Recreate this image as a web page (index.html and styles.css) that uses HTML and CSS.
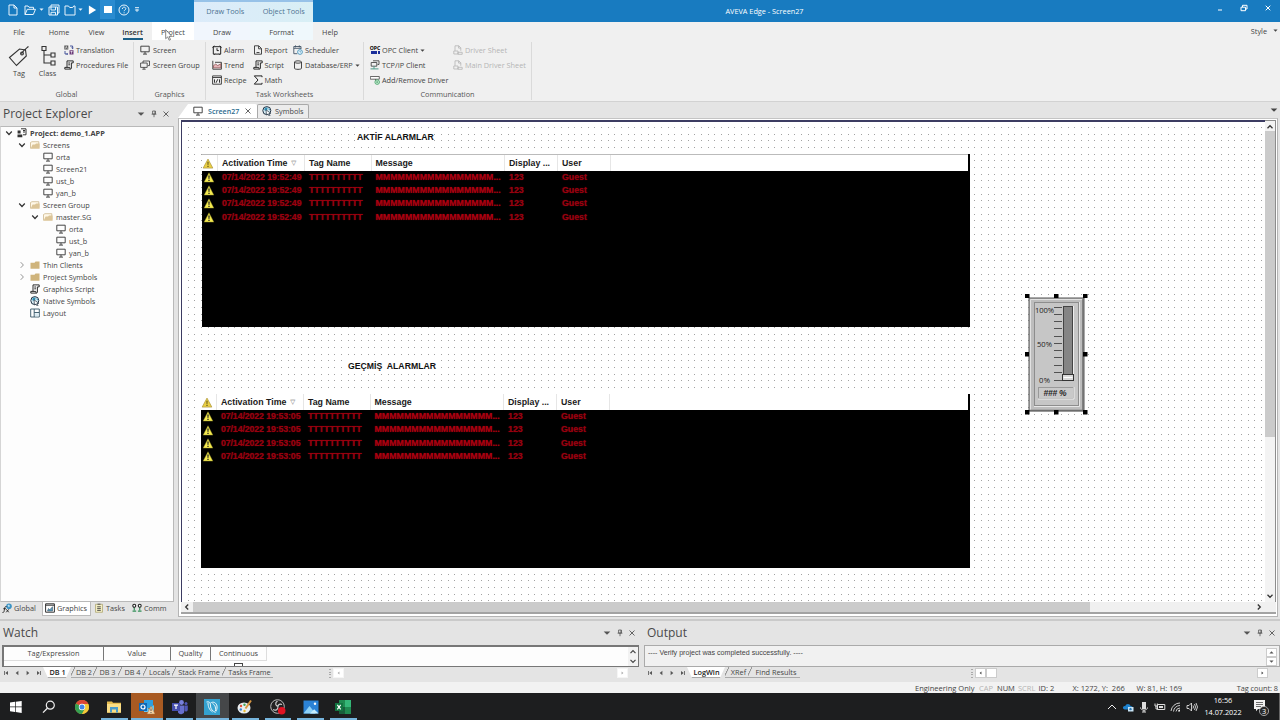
FILE: index.html
```html
<!DOCTYPE html>
<html lang="en">
<head>
<meta charset="utf-8">
<title>AVEVA Edge - Screen27</title>
<link rel="stylesheet" href="styles.css">
</head>
<body>
<svg class="sprite" width="0" height="0" aria-hidden="true">
<defs>
<symbol id="monitor" viewBox="0 0 10 10"><path d="M.8 1.2h8.4v5.6H.8zM5 6.8v2.2M3 9.1h4" fill="none" stroke="#333" stroke-width=".9"/></symbol>
<symbol id="monitors" viewBox="0 0 10 10"><path d="M3 1h6.5v4.6H7.8M.6 3h6.6v4.4H.6zM3 3V1M4 7.4v1.8M2.3 9.2h3.4" fill="none" stroke="#333" stroke-width=".8"/></symbol>
<symbol id="script" viewBox="0 0 10 10"><path d="M3 .9h6.2v2H7.4V8c0 1.4-1.6 1.4-1.6 0V7.4H.8v1.7h5.6M3 .9v6.3M4.3 3h1.8M4.3 4.8h1.8" fill="none" stroke="#222" stroke-width=".95"/></symbol>
<symbol id="translate" viewBox="0 0 10 10"><path d="M.3 .5h4v4h-4z" fill="#555"/><path d="M5.5 5.2h4v4.3h-4z" fill="#6b3a78"/><path d="M1.3 3.7l1-2.3 1 2.3M6.3 6.3h2.4M7.5 6v2.7" stroke="#fff" stroke-width=".6" fill="none"/><path d="M6 1h2.6v2.5M1 6v3h2.5M7.5 2.7l1.1 1 1-1M2.7 8l1 1-1 1" fill="none" stroke="#238" stroke-width=".8"/></symbol>
<symbol id="folder-open" viewBox="0 0 10 10"><path d="M.5 8.5v-6L2 1.7h6.8v5.800" fill="#fff8e8" stroke="#cdb88d" stroke-width=".8"/><path d="M.6 8.800L2.600 4.500H5l1-1h3.600v5.300z" fill="#dcc598"/></symbol>
<symbol id="folder" viewBox="0 0 10 10"><path d="M.5 2.800h4l1-1.200h4v7.200h-9z" fill="#cfb47c"/></symbol>
<symbol id="chev-down" viewBox="0 0 8 8"><path d="M1.200 2.500L4 5.500l2.800-3" fill="none" stroke="#333" stroke-width="1.200"/></symbol>
<symbol id="chev-right" viewBox="0 0 8 8"><path d="M2.700 1.200l2.700 2.800-2.700 2.800" fill="none" stroke="#888" stroke-width=".9"/></symbol>
<symbol id="tri-down" viewBox="0 0 6 6"><path d="M.5 1.800h5L3 4.400z" fill="currentColor"/></symbol>
<symbol id="tri-up" viewBox="0 0 6 6"><path d="M.5 4.200h5L3 1.600z" fill="currentColor"/></symbol>
<symbol id="tri-left" viewBox="0 0 6 6"><path d="M4.400 .7v4.600L1.700 3z" fill="currentColor"/></symbol>
<symbol id="tri-right" viewBox="0 0 6 6"><path d="M1.600 .7v4.600L4.300 3z" fill="currentColor"/></symbol>
<symbol id="tri-first" viewBox="0 0 6 6"><path d="M5 1v4L2.300 3zM1 1h.8v4H1z" fill="currentColor"/></symbol>
<symbol id="tri-last" viewBox="0 0 6 6"><path d="M1 1v4l2.700-2zM4.200 1H5v4h-.8z" fill="currentColor"/></symbol>
<symbol id="pin" viewBox="0 0 8 8"><path d="M2.600 1h2.800v3H2.600zM1.600 4.200h4.800M4 4.200v3" fill="none" stroke="#555" stroke-width=".8"/><path d="M4.600 1h.8v3h-.8z" fill="#555"/></symbol>
<symbol id="close" viewBox="0 0 8 8"><path d="M1.500 1.500l5 5M6.500 1.500l-5 5" stroke="currentColor" stroke-width=".9" fill="none"/></symbol>
<symbol id="globe" viewBox="0 0 10 10"><circle cx="4.800" cy="4.600" r="4" fill="#d9edf5" stroke="#234" stroke-width="1"/><path d="M2.500 2.300L5 1.200l.7 1.900L4 4.700 2.300 4.300zM6.300 2.200l1.800 1.400-1 1z" fill="#2f8fb5"/><path d="M4 3.800l4.800 3.500-2 .3 1.300 1.900-1 .5-1.100-2L4.500 9z" fill="#fff" stroke="#234" stroke-width=".7"/></symbol>
<symbol id="layout" viewBox="0 0 10 10"><path d="M.7 1h8.600v8H.7zM4.200 1v8M4.200 4.500h5" fill="#fff" stroke="#356" stroke-width=".9"/><path d="M5 5.300h3.600v3H5z" fill="#d8eaf2"/></symbol>
<symbol id="warn" viewBox="0 0 12 12"><path d="M6 .8L11.300 11H.7z" fill="#f5ea50" stroke="#8b8524" stroke-width=".5" stroke-linejoin="round"/><path d="M5.200 3.700h1.600l-.35 4h-.9zM5.300 8.500h1.400v1.400H5.300z" fill="#222"/></symbol>
<symbol id="warn-soft" viewBox="0 0 12 12"><path d="M6 1.200L11.300 11H.7z" fill="#e9cf42" stroke="#b09a45" stroke-width=".8" stroke-linejoin="round"/><path d="M5.400 4h1.200l-.2 3.700h-.8zM5.400 8.500h1.200v1.300H5.400z" fill="#544716"/></symbol>
<symbol id="sheet" viewBox="0 0 10 10"><path d="M2 .8h3.800l2 2v3M2 .8v5M5.600 .8v2.300h2.200M.8 6h4.200v3H.8zM5 7.300h4.200v2H5z" fill="none" stroke="#b4b4b4" stroke-width=".8"/></symbol>
</defs>
</svg>

<div class="window">
  <header class="titlebar">
    <div class="quick">
      <svg class="q q-new" viewBox="0 0 10 12"><path d="M1 1h5l3 3v7H1zM6 1v3h3"/></svg>
      <svg class="q q-open" viewBox="0 0 12 12"><path d="M1 10.500V2h3l1 1.300h4.500v2M1 10.500L3.300 5.300H11.500L9.300 10.500z"/></svg>
      <svg class="caret c1"><use href="#tri-down"/></svg>
      <svg class="q q-save" viewBox="0 0 12 12"><path d="M3 3V1h8v8H9.500M1 3h8.500v8H1zM3 3v3h4.500V3M3 11V8.300h4.500V11"/></svg>
      <svg class="q q-dir" viewBox="0 0 12 12"><path d="M1 2h3.500l1.200 1.500h3L9.700 2H11v9H1z"/></svg>
      <svg class="caret c2"><use href="#tri-down"/></svg>
      <svg class="q q-play" viewBox="0 0 10 12"><path d="M1 1l8 5-8 5z" fill="#fff"/></svg>
      <span class="stop"><i></i></span>
      <svg class="q q-help" viewBox="0 0 12 12"><circle cx="6" cy="6" r="5"/><path d="M4.300 5c0-2.500 3.500-2.300 3.500-.3C7.800 6 6.100 5.900 6.100 7.200M6.100 8.300v1"/></svg>
      <svg class="q q-more" viewBox="0 0 6 6"><path d="M1 .7h4M1.500 2.800L3 4.500l1.500-1.700z"/></svg>
    </div>
    <div class="ctx-heads"><span>Draw Tools</span><span>Object Tools</span></div>
    <div class="app-title">AVEVA Edge - Screen27</div>
    <div class="win-btns">
      <svg viewBox="0 0 8 8"><path d="M2 6h4"/></svg>
      <svg viewBox="0 0 8 8"><path d="M1 3.200h4.500v3.500H1zM2.500 3V1.300H7V5H5.700"/></svg>
      <svg viewBox="0 0 8 8"><path d="M1.700 1.700l4.600 4.600M6.300 1.700L1.700 6.300"/></svg>
    </div>
  </header>

  <nav class="menu">
    <span class="m-file">File</span><span class="m-home">Home</span><span class="m-view">View</span>
    <span class="m-insert">Insert</span><span class="m-project">Project</span>
    <span class="m-draw">Draw</span><span class="m-format">Format</span><span class="m-help">Help</span>
    <span class="m-style">Style<svg class="caret"><use href="#tri-down"/></svg></span>
  </nav>

  <section class="ribbon">
    <div class="group g-global">
      <div class="group-body">
        <div class="big"><svg viewBox="0 0 22 22"><path d="M1.500 12.500L11.500 4l6 1 .8 6L8.500 20.500zM13.500 8.700c2-3.500 4.500-5 7-7.200" /><circle cx="14" cy="8.500" r="1.400"/></svg><span>Tag</span></div>
        <div class="big"><svg viewBox="0 0 22 22"><path d="M5 1.500h4v4H5zM7 5.500V18h7M7 10h7M14 8h4v4h-4zM14 16h4v4h-4z"/></svg><span>Class</span></div>
        <div class="items">
          <div class="item"><svg><use href="#translate"/></svg>Translation</div>
          <div class="item"><svg><use href="#script"/></svg>Procedures File</div>
        </div>
      </div>
      <div class="group-name">Global</div>
    </div>
    <div class="group g-graphics">
      <div class="group-body items">
        <div class="item"><svg><use href="#monitor"/></svg>Screen</div>
        <div class="item"><svg><use href="#monitors"/></svg>Screen Group</div>
      </div>
      <div class="group-name">Graphics</div>
    </div>
    <div class="group g-task">
      <div class="group-body">
        <div class="items">
          <div class="item"><svg viewBox="0 0 10 10"><path d="M1.300 1.700h7.400v7.400H1.300z" fill="none" stroke="#222"/><path d="M5 3.200v2.400h1.800M.5 2.500l1.700-1.800M7.800 .7l1.700 1.800M2 9.800l1-1M8 9.800l-1-1" stroke="#222" fill="none"/></svg>Alarm</div>
          <div class="item"><svg viewBox="0 0 10 10"><path d="M.8 .8v8.400h8.600V2.300H3" fill="none" stroke="#333" stroke-width=".9"/><path d="M1.500 7.800V5.600l2.200-1.500 2 1.500L8.800 3.800v4z" fill="#e6b7bb" stroke="#733" stroke-width=".6"/></svg>Trend</div>
          <div class="item"><svg viewBox="0 0 10 10"><path d="M.6 .9h8.800v8.300H.6zM.6 2.500h8.800" fill="none" stroke="#333" stroke-width=".9"/><path d="M2.500 4.400v3.300M4 7.800l1.800-3.600M7.500 4.400v3.300" stroke="#333"/></svg>Recipe</div>
        </div>
        <div class="items">
          <div class="item"><svg viewBox="0 0 10 10"><path d="M1.500 .8h4.300l2.700 2.700v5.700h-7zM5.600 1v2.800h2.800M3.500 7.500h3" fill="none" stroke="#333" stroke-width=".9"/></svg>Report</div>
          <div class="item"><svg><use href="#script"/></svg>Script</div>
          <div class="item"><svg viewBox="0 0 10 10"><path d="M9 2.200V.9H1.300L5 5 1.300 9.100H9V7.800" fill="none" stroke="#222"/></svg>Math</div>
        </div>
        <div class="items">
          <div class="item"><svg viewBox="0 0 10 10"><path d="M8 4V1.500H.8v7.200h3.500M.8 3.300H8M2.500 .4v2M6.300 .4v2" fill="none" stroke="#456" stroke-width=".9"/><circle cx="7" cy="7" r="2.400" fill="#e5f3fa" stroke="#3a8db8" stroke-width=".8"/><path d="M7 5.700V7h1" stroke="#3a8db8" stroke-width=".6" fill="none"/></svg>Scheduler</div>
          <div class="item"><svg viewBox="0 0 10 10"><path d="M1.500 2v6.300c0 1.400 7 1.400 7 0V2" fill="none" stroke="#333" stroke-width=".9"/><ellipse cx="5" cy="2" rx="3.500" ry="1.200" fill="none" stroke="#333" stroke-width=".9"/></svg>Database/ERP<svg class="caret"><use href="#tri-down"/></svg></div>
        </div>
      </div>
      <div class="group-name">Task Worksheets</div>
    </div>
    <div class="group g-comm">
      <div class="group-body">
        <div class="items">
          <div class="item"><span class="opc"><b>OPC</b><i></i></span>OPC Client<svg class="caret"><use href="#tri-down"/></svg></div>
          <div class="item"><svg viewBox="0 0 10 10"><path d="M3 .8h6v3.700H7.600M1.200 2.500h5.600v3.700H1.200z" fill="none" stroke="#333" stroke-width=".8"/><path d="M4 6.200v2.500M.5 8.900h8" stroke="#4a9a88" stroke-width="1"/></svg>TCP/IP Client</div>
          <div class="item"><svg viewBox="0 0 10 10"><path d="M.3 1.500h9v2.700h-9z" fill="#fff" stroke="#444" stroke-width=".8"/><path d="M5.500 4.200V6" stroke="#444" stroke-width=".8"/><circle cx="7.200" cy="7.100" r="2.300" fill="#d7f0df" stroke="#3aa060" stroke-width=".8"/><path d="M6 7.100h2.400M7.200 5.900v2.400" stroke="#3aa060" stroke-width=".6"/></svg>Add/Remove Driver</div>
        </div>
        <div class="items off">
          <div class="item"><svg><use href="#sheet"/></svg>Driver Sheet</div>
          <div class="item"><svg><use href="#sheet"/></svg>Main Driver Sheet</div>
        </div>
      </div>
      <div class="group-name">Communication</div>
    </div>
  </section>

  <main class="work">
    <aside class="explorer">
      <div class="pane-head"><h2>Project Explorer</h2><svg class="caret"><use href="#tri-down"/></svg><svg><use href="#pin"/></svg><svg><use href="#close"/></svg></div>
      <ul class="tree">
        <li class="l0"><svg class="chev"><use href="#chev-down"/></svg><svg class="ico" viewBox="0 0 10 10"><path d="M4 .8h5v6H6M6 2.500h2M6 4h2" fill="none" stroke="#333"/><path d="M.6 2.500h3v3h-3zM.5 6.500h4.800v2.700H.5z" fill="#333"/></svg><b>Project: demo_1.APP</b></li>
        <li class="l1"><svg class="chev"><use href="#chev-down"/></svg><svg class="ico"><use href="#folder-open"/></svg>Screens</li>
        <li class="l2"><i class="chev"></i><svg class="ico"><use href="#monitor"/></svg>orta</li>
        <li class="l2"><i class="chev"></i><svg class="ico"><use href="#monitor"/></svg>Screen21</li>
        <li class="l2"><i class="chev"></i><svg class="ico"><use href="#monitor"/></svg>ust_b</li>
        <li class="l2"><i class="chev"></i><svg class="ico"><use href="#monitor"/></svg>yan_b</li>
        <li class="l1"><svg class="chev"><use href="#chev-down"/></svg><svg class="ico"><use href="#folder-open"/></svg>Screen Group</li>
        <li class="l2"><svg class="chev"><use href="#chev-down"/></svg><svg class="ico"><use href="#folder-open"/></svg>master.SG</li>
        <li class="l3"><i class="chev"></i><svg class="ico"><use href="#monitor"/></svg>orta</li>
        <li class="l3"><i class="chev"></i><svg class="ico"><use href="#monitor"/></svg>ust_b</li>
        <li class="l3"><i class="chev"></i><svg class="ico"><use href="#monitor"/></svg>yan_b</li>
        <li class="l1"><svg class="chev"><use href="#chev-right"/></svg><svg class="ico"><use href="#folder"/></svg>Thin Clients</li>
        <li class="l1"><svg class="chev"><use href="#chev-right"/></svg><svg class="ico"><use href="#folder"/></svg>Project Symbols</li>
        <li class="l1"><i class="chev"></i><svg class="ico"><use href="#script"/></svg>Graphics Script</li>
        <li class="l1"><i class="chev"></i><svg class="ico"><use href="#globe"/></svg>Native Symbols</li>
        <li class="l1"><i class="chev"></i><svg class="ico"><use href="#layout"/></svg>Layout</li>
      </ul>
      <div class="side-tabs">
        <span class="st1"><svg viewBox="0 0 10 10"><circle cx="7" cy="3.300" r="2.800" fill="#3b93c4"/><path d="M5.500 2.300l1.500-.8 1 1.500-1.200 1.500" fill="#bfe0ef"/><path d="M.5 9.500c1.500.3 1.600-1 2-3.500.3-2 .7-2.700 2-2.500M1.300 5.700h2.600M4.300 6.300l2.500 3M6.800 6.300l-2.600 3" fill="none" stroke="#222" stroke-width=".9"/></svg>Global</span>
        <span class="st2"><svg viewBox="0 0 10 10"><path d="M.6 .8h8.800v8.400H.6zM.6 2.200h8.800" fill="#fff" stroke="#333"/><path d="M2.500 8l1-2.500 1.300 1.300L7.500 3.700V8z" fill="#58a0c4" stroke="#345" stroke-width=".5"/></svg>Graphics</span>
        <span class="st3"><svg viewBox="0 0 10 10"><path d="M1.500 1.300h7v8h-7z" fill="#f3eec4" stroke="#a9a06a" stroke-width=".7"/><path d="M3.500 1.200h3M3.200 3.800h3.600M3.200 5.600h3.600M3.200 7.400h3.600" stroke="#444" stroke-width=".9"/></svg>Tasks</span>
        <span class="st4"><svg viewBox="0 0 11 10"><path d="M2.500 4v3.500M8.500 4v3.500M.6 8.500h4M6.500 8.500h4" stroke="#35905a" stroke-width="1.300"/><circle cx="2.500" cy="2.500" r="1.600" fill="#fff" stroke="#222" stroke-width="1.200"/><circle cx="8.500" cy="2.500" r="1.600" fill="#fff" stroke="#222" stroke-width="1.200"/></svg>Comm</span>
      </div>
    </aside>

    <section class="editor">
      <div class="doc-tabs">
        <div class="tab active"><svg class="ico"><use href="#monitor"/></svg>Screen27<svg class="x"><use href="#close"/></svg></div>
        <div class="tab"><svg class="ico"><use href="#globe"/></svg>Symbols</div>
        <svg class="caret"><use href="#tri-down"/></svg>
      </div>
      <div class="doc">
        <div class="doc-row">
          <div class="canvas">
            <svg class="dots" width="100%" height="100%"><defs><pattern id="grid" width="20" height="20" patternUnits="userSpaceOnUse"><path d="M6 5h1v1H6zM12 5h1v1h-1zM19 5h1v1h-1zM6 12h1v1H6zM12 12h1v1h-1zM19 12h1v1h-1zM6 18h1v1H6zM12 18h1v1h-1zM19 18h1v1h-1z" fill="#a2a2a2"/></pattern></defs><rect width="100%" height="100%" fill="url(#grid)"/></svg>
            <div class="caption cap1">AKTİF ALARMLAR</div>
            <div class="alarms a1">
              <div class="ahead"><span><svg><use href="#warn-soft"/></svg></span><span>Activation Time<em>▽</em></span><span>Tag Name</span><span>Message</span><span>Display ...</span><span>User</span></div>
              <div class="arow"><span><svg><use href="#warn"/></svg></span><span class="t">07/14/2022 19:52:49</span><span>TTTTTTTTTT</span><span class="m">MMMMMMMMMMMMMMMM...</span><span>123</span><span>Guest</span></div>
              <div class="arow"><span><svg><use href="#warn"/></svg></span><span class="t">07/14/2022 19:52:49</span><span>TTTTTTTTTT</span><span class="m">MMMMMMMMMMMMMMMM...</span><span>123</span><span>Guest</span></div>
              <div class="arow"><span><svg><use href="#warn"/></svg></span><span class="t">07/14/2022 19:52:49</span><span>TTTTTTTTTT</span><span class="m">MMMMMMMMMMMMMMMM...</span><span>123</span><span>Guest</span></div>
              <div class="arow"><span><svg><use href="#warn"/></svg></span><span class="t">07/14/2022 19:52:49</span><span>TTTTTTTTTT</span><span class="m">MMMMMMMMMMMMMMMM...</span><span>123</span><span>Guest</span></div>
            </div>
            <div class="caption cap2">GEÇMİŞ&nbsp; ALARMLAR</div>
            <div class="alarms a2">
              <div class="ahead"><span><svg><use href="#warn-soft"/></svg></span><span>Activation Time<em>▽</em></span><span>Tag Name</span><span>Message</span><span>Display ...</span><span>User</span></div>
              <div class="arow"><span><svg><use href="#warn"/></svg></span><span class="t">07/14/2022 19:53:05</span><span>TTTTTTTTTT</span><span class="m">MMMMMMMMMMMMMMMM...</span><span>123</span><span>Guest</span></div>
              <div class="arow"><span><svg><use href="#warn"/></svg></span><span class="t">07/14/2022 19:53:05</span><span>TTTTTTTTTT</span><span class="m">MMMMMMMMMMMMMMMM...</span><span>123</span><span>Guest</span></div>
              <div class="arow"><span><svg><use href="#warn"/></svg></span><span class="t">07/14/2022 19:53:05</span><span>TTTTTTTTTT</span><span class="m">MMMMMMMMMMMMMMMM...</span><span>123</span><span>Guest</span></div>
              <div class="arow"><span><svg><use href="#warn"/></svg></span><span class="t">07/14/2022 19:53:05</span><span>TTTTTTTTTT</span><span class="m">MMMMMMMMMMMMMMMM...</span><span>123</span><span>Guest</span></div>
            </div>
            <svg class="slider" width="64" height="122" viewBox="0 0 64 122">
              <rect x="4" y="4" width="55" height="113" fill="#bdbdbd" stroke="#555"/>
              <path d="M5.500 116V5.500H58" fill="none" stroke="#e2e2e2"/>
              <path d="M58 5v111.500H5" fill="none" stroke="#6c6c6c" stroke-width="1.500"/>
              <rect x="9.500" y="8.500" width="44" height="103" fill="#c6c6c6" stroke="#8d8d8d"/>
              <path d="M54.500 8v104.500H9" fill="none" stroke="#e6e6e6"/>
              <path d="M29 13.500h8M29 20.500h8M29 27.500h8M29 34.500h8M29 42.500h8M29 49.500h8M29 56.500h8M29 63.500h8M29 71.500h8M29 78.500h8M29 86.500h8" stroke="#444" stroke-width=".9"/>
              <rect x="38.500" y="12.500" width="9" height="72" fill="#858585" stroke="#444"/>
              <path d="M48.500 12v73" stroke="#eee"/>
              <rect x="37.500" y="80.500" width="11" height="6" fill="#d9d9d9" stroke="#333"/><path d="M38.500 83.500h9" stroke="#fff"/>
              <rect x="13.500" y="93.500" width="35" height="11" fill="#c9c9c9" stroke="#999"/><path d="M13 105h36V93" fill="none" stroke="#eee"/>
              <g class="slider-text"><text x="10" y="18.800" textLength="19">100%</text><text x="12" y="53.300" textLength="15">50%</text><text x="14" y="88.700" textLength="11">0%</text></g>
              <text class="slider-value" x="18.500" y="102.300" textLength="23">### %</text>
              <path d="M0 0h4.500v4H0zM29 0h4.500v4H29zM58 0h4.500v4H58zM0 58h4v4.500H0zM58 58h4.500v4.500H58zM0 116h4.500v4.500H0zM29 116h4.500v4.500H29zM58 116h4.500v4.500H58z" fill="#000"/>
            </svg>
          </div>
          <div class="vbar"><svg viewBox="0 0 8 8"><path d="M1.500 5.200L4 2.700l2.500 2.500"/></svg><i></i><svg viewBox="0 0 8 8"><path d="M1.500 2.800L4 5.300l2.500-2.500"/></svg></div>
        </div>
        <div class="hbar"><svg viewBox="0 0 8 8"><path d="M5.200 1.500L2.700 4l2.500 2.500"/></svg><i></i><svg viewBox="0 0 8 8"><path d="M2.800 1.500L5.300 4 2.800 6.500"/></svg></div>
      </div>
    </section>
  </main>

  <section class="bottom">
    <div class="watch">
      <div class="pane-head"><h2>Watch</h2><svg class="caret"><use href="#tri-down"/></svg><svg><use href="#pin"/></svg><svg><use href="#close"/></svg></div>
      <div class="watch-grid">
        <div class="wcols"><span class="w1">Tag/Expression</span><span class="w2">Value</span><span class="w3">Quality</span><span class="w4">Continuous</span></div>
        <div class="wbody"><i class="check"></i></div>
        <div class="wscroll"><svg viewBox="0 0 8 8"><path d="M1.500 5.200L4 2.700l2.500 2.500"/></svg><svg viewBox="0 0 8 8"><path d="M1.500 2.800L4 5.300l2.500-2.500"/></svg></div>
      </div>
      <div class="sheets">
        <div class="nav"><svg><use href="#tri-first"/></svg><svg><use href="#tri-left"/></svg><svg><use href="#tri-right"/></svg><svg><use href="#tri-last"/></svg></div>
        <span class="sheet on s1">DB 1</span><span class="sheet s2">DB 2</span><span class="sheet s3">DB 3</span><span class="sheet s4">DB 4</span><span class="sheet s5">Locals</span><span class="sheet s6">Stack Frame</span><span class="sheet s7">Tasks Frame</span>
        <div class="sbar soft"><i class="grip"></i><svg><use href="#tri-left"/></svg><svg class="end"><use href="#tri-right"/></svg></div>
      </div>
    </div>
    <div class="output">
      <div class="pane-head"><h2>Output</h2><svg class="caret"><use href="#tri-down"/></svg><svg><use href="#pin"/></svg><svg><use href="#close"/></svg></div>
      <div class="log"><p>---- Verify project was completed successfully. ----</p><div class="lscroll"><svg><use href="#tri-up"/></svg><svg><use href="#tri-down"/></svg></div></div>
      <div class="sheets">
        <div class="nav"><svg><use href="#tri-first"/></svg><svg><use href="#tri-left"/></svg><svg><use href="#tri-right"/></svg><svg><use href="#tri-last"/></svg></div>
        <span class="sheet on o1">LogWin</span><span class="sheet o2">XRef</span><span class="sheet o3">Find Results</span>
        <div class="sbar"><i class="grip"></i><svg><use href="#tri-left"/></svg><i class="thumb"></i><svg class="end"><use href="#tri-right"/></svg></div>
      </div>
    </div>
  </section>

  <footer class="status"><span class="f1">Engineering Only</span><span class="f2 dim">CAP</span><span class="f3">NUM</span><span class="f4 dim">SCRL</span><span class="f5">ID: 2</span><span class="f6">X: 1272, Y:&nbsp; 266</span><span class="f7">W: 81, H: 169</span><span class="f8">Tag count: 8</span></footer>

  <div class="taskbar">
    <div class="app"><svg viewBox="0 0 16 16"><path d="M2 3.500l5-.7v4.700H2zM7.700 2.700l6-.8v5.600h-6zM2 8.300h5V13l-5-.7zM7.700 8.300h6v5.600l-6-.8z" fill="#fff"/></svg></div>
    <div class="app"><svg viewBox="0 0 16 16"><circle cx="9.300" cy="6.200" r="4" fill="none" stroke="#eee" stroke-width="1.200"/><path d="M6.400 9.200L2 13.600" stroke="#eee" stroke-width="1.300"/></svg></div>
    <div class="app"><svg viewBox="0 0 16 16"><circle cx="8" cy="8" r="7" fill="#e7b928"/><path d="M8 8L2 4.400A7 7 0 0 1 14.300 5H8z" fill="#dc4437"/><path d="M8 8L2 4.400A7 7 0 0 0 8 15l3-5.300z" fill="#35a053"/><path d="M14.300 5A7 7 0 0 1 8 15l3-5.500L9 5z" fill="#f3c83a"/><circle cx="8" cy="8" r="3.200" fill="#fff"/><circle cx="8" cy="8" r="2.500" fill="#4384e8"/></svg></div>
    <div class="app run"><svg viewBox="0 0 16 16"><path d="M1 2.500h5l1 1.300h8v10H1z" fill="#e6bd50"/><path d="M1 5h14v8.500H1z" fill="#fade86"/><path d="M4 8h8v5.500h-2v-3H6v3H4z" fill="#4a9ccb"/></svg></div>
    <div class="app run alert"><svg viewBox="0 0 16 16"><path d="M5 1h9v8H5z" fill="#2d9fe0"/><path d="M5 6l5 4 5-4v7H5z" fill="#64c5f0"/><path d="M0 4h8v8H0z" fill="#1168b4"/><circle cx="4" cy="8" r="2" fill="none" stroke="#fff" stroke-width="1.200"/><path d="M12 7l4 8H8z" fill="#f7d4a5" stroke="#aa773c" stroke-width=".5"/><path d="M12 9.500V12M12 13v1" stroke="#555"/></svg></div>
    <div class="app run"><svg viewBox="0 0 16 16"><circle cx="9.500" cy="3.500" r="2.400" fill="#7780dc"/><circle cx="14" cy="4.400" r="1.500" fill="#5057b8"/><path d="M6 6.500h6.500v5a3.500 3.500 0 0 1-6.500 2z" fill="#6870ce"/><path d="M12.800 6.500h3V11a2 2 0 0 1-3 1z" fill="#5057b8"/><path d="M0 4h8v8H0z" fill="#454eae"/><path d="M2 6.200h4M4 6.200V10" stroke="#fff" stroke-width="1.200"/></svg></div>
    <div class="app run hot"><svg viewBox="0 0 16 16"><path d="M0 0h16v16H0z" fill="#34a2d0"/><path d="M2.500 3c3-1 4 1 4 4s2 5 5 6.500M4 3.500c0 4 1 7 4.500 9.500M6.500 4c3-2 6 0 6.500 3s-1 5-1 5.500M8.500 4.500c2 1 3.500 3 3 7.500" fill="none" stroke="#e9f6fc" stroke-width="1"/></svg></div>
    <div class="app run"><svg viewBox="0 0 16 16"><ellipse cx="7" cy="9" rx="6.500" ry="5.500" fill="#e9eef0"/><circle cx="4" cy="7" r="1.200" fill="#e05038"/><circle cx="7.500" cy="5.700" r="1.200" fill="#47a558"/><circle cx="3.800" cy="10.500" r="1.200" fill="#3a85d0"/><circle cx="7.500" cy="12" r="1.200" fill="#e6b92f"/><path d="M8.500 9.500L14 1.500" stroke="#d99742" stroke-width="2"/></svg></div>
    <div class="app run"><svg viewBox="0 0 16 16"><circle cx="7.500" cy="7.500" r="6.800" fill="#222" stroke="#bbb" stroke-width="1"/><path d="M7.500 2c-3 2-2 5 1 5.500M3 10.500c3 1.500 5 0 5-3M12 5.500c-3-1-5 1-4 4" fill="none" stroke="#ccc" stroke-width="1.200"/><circle cx="11.700" cy="11.700" r="3.800" fill="#e11322"/></svg></div>
    <div class="app run"><svg viewBox="0 0 16 16"><path d="M.5 1.500h15v13H.5z" fill="#2b82d5"/><path d="M.5 14.500L6.500 7l6 7.500z" fill="#8fd2f7"/><path d="M7 14.500l4.200-4.300 4.300 4.300z" fill="#c7edfd"/><circle cx="12" cy="4.800" r="1.200" fill="#fff"/></svg></div>
    <div class="app run"><svg viewBox="0 0 16 16"><path d="M4 1h12v14H4z" fill="#1f8a50"/><path d="M10 1h6v7h-6z" fill="#35b677"/><path d="M4 8h6v7H4z" fill="#185f3b"/><path d="M0 4h8v8H0z" fill="#127440"/><path d="M2.300 5.800l3.400 4.500M5.700 5.800l-3.400 4.500" stroke="#fff" stroke-width="1.200"/></svg></div>
    <div class="tray">
      <svg viewBox="0 0 12 12"><path d="M2 8l4-4 4 4" fill="none" stroke="#eee"/></svg>
      <svg viewBox="0 0 12 12"><path d="M2.500 8.500c-3-1-1-4 .7-3.300C4 2 8 2.300 8.500 5c3 0 3 3.500 1 3.500z" fill="#1e83cf"/><path d="M6 6h5.500v4.500H6z" fill="#c9e4f5"/><path d="M7 8.300c1-2 2-2 3 0-1 1.300-2 1.300-3 0" fill="#2b77b0"/></svg>
      <svg viewBox="0 0 12 12"><path d="M4 1h4v7H4z" fill="#ddd"/><path d="M2.500 6.500C2.500 10 9.500 10 9.500 6.500M6 9v2M4 11h4" fill="none" stroke="#ddd" stroke-width="1"/></svg>
      <svg viewBox="0 0 12 12"><path d="M3.500 3.500h7.300v5H3.500zM1 2.500v2.500h2.300V2.500M2 5v3h2" fill="none" stroke="#ddd"/><path d="M5 5h4v2H5z" fill="#ddd"/></svg>
      <svg viewBox="0 0 12 12"><path d="M1 10a9 9 0 0 1 9-8M3.500 10.500a6.500 6.500 0 0 1 6.500-6M6 10.500a4 4 0 0 1 4-3.500" fill="none" stroke="#ccc"/><path d="M8 10.500a2 2 0 0 1 2-2v2z" fill="#eee"/></svg>
      <svg viewBox="0 0 12 12"><path d="M1 4.500h2L5.500 2v8L3 7.500H1zM7 4.500q1 1.500 0 3M8.500 3q2 3 0 6M10 2q3 4 0 8" fill="none" stroke="#ddd" stroke-width=".9"/></svg>
    </div>
    <div class="clock"><span>16:56</span><span>14.07.2022</span></div>
    <div class="notice"><svg viewBox="0 0 17 18"><path d="M1 1h11v9H5l-2 2.300V10H1z" fill="#f3f3f3"/><path d="M3 3.500h7M3 5.500h7M3 7.500h5" stroke="#333" stroke-width=".7"/><circle cx="11" cy="12" r="4.600" fill="#2b2b2b" stroke="#bbb" stroke-width=".8"/></svg><b>3</b></div>
  </div>

  <svg class="pointer" viewBox="0 0 8 12"><path d="M.7.7v9l2-1.800 1.400 3.300 1.400-.6-1.400-3.200h2.700z" fill="#fff" stroke="#555" stroke-width=".7"/></svg>
</div>
</body>
</html>
```
FILE: styles.css
```css
* { box-sizing: border-box; }
body { margin: 0; background: #e4e4e4; font: 7.3px/10px "Open Sans", "Noto Sans", sans-serif; color: #444; overflow: hidden; }
svg { display: block; flex: none; }
h2, p, ul { margin: 0; padding: 0; }
i { display: block; font-style: normal; }
.sprite { position: absolute; }
.window { position: relative; width: 1280px; height: 720px; display: flex; flex-direction: column; }
.caret { width: 6px; height: 6px; color: #444; }

/* title bar */
.titlebar { height: 22px; display: flex; background: #187bc0; color: #fff; }
.quick { width: 194px; display: flex; align-items: center; padding: 0 0 3px 8px; }
.q { height: 12px; fill: none; stroke: #e8f4fc; stroke-width: 1; }
.quick .caret { width: 5px; height: 5px; color: #e8f4fc; }
.q-new { width: 10px; margin-right: 6px; }
.q-open { width: 12px; }
.c1 { margin: 0 4px 0 3px; }
.q-save { width: 12px; margin-right: 4px; }
.q-dir { width: 12px; }
.c2 { margin: 0 5px 0 2px; }
.q-play { width: 9px; }
.q-play path { stroke: none; }
.stop { width: 15px; height: 19px; margin: 0 3px 0 3px; background: #2a8bd0; display: flex; align-items: center; justify-content: center; }
.stop i { width: 8px; height: 7px; background: #fff; }
.q-help { width: 12px; }
.q-more { width: 6px; height: 6px; margin-left: 4px; }
.ctx-heads { width: 119px; display: flex; background: linear-gradient(90deg, #dcebfa, #d8eff5); border-top: 2px solid #97c2e8; color: #4d7291; padding-left: 2px; }
.ctx-heads span { flex: 1; text-align: center; line-height: 19px; }
.app-title { flex: 1; text-align: center; line-height: 22px; }
.win-btns { width: 64px; display: flex; gap: 16px; padding-top: 4px; }
.win-btns svg { width: 8px; height: 8px; fill: none; stroke: #fff; stroke-width: 1; }

/* menu */
.menu { height: 20px; display: flex; background: #f0f0f0; line-height: 20px; }
.menu span { text-align: center; height: 18px; }
.m-file { width: 38px; }
.m-home { width: 42px; }
.m-view { width: 33px; }
.m-insert { width: 39px; font-weight: 600; color: #333; background: linear-gradient(#1c5f86, #1c5f86) 50% 100% / 20px 2px no-repeat; }
.m-project { width: 42px; background: #fff; }
.m-draw { width: 56px; background: #f1f6fd; }
.m-format { width: 63px; background: #eff8fc; }
.m-help { width: 34px; }
.m-style { margin-left: auto; display: flex; align-items: center; gap: 6px; padding-right: 2px; }
.menu .caret { width: 5px; height: 5px; margin-bottom: 2px; }

/* ribbon */
.ribbon { height: 60px; display: flex; background: #f0f0f0; border-bottom: 1px solid #d2d2d2; }
.group { display: flex; flex-direction: column; border-right: 1px solid #dadada; height: 58px; }
.group-body { flex: 1; display: flex; padding-top: 1px; }
.group-name { text-align: center; height: 11px; line-height: 10px; color: #555; }
.items { display: flex; flex-direction: column; }
.item { display: flex; align-items: center; height: 14.700px; gap: 2px; white-space: nowrap; }
.item svg { width: 10px; height: 10px; }
.item svg.caret { width: 5px; height: 5px; }
.g-global { width: 134px; }
.g-graphics { width: 72px; }
.g-graphics .group-body { padding-left: 6px; }
.g-graphics .item { gap: 3px; }
.g-task { width: 158px; }
.g-task .group-body { padding-left: 6px; }
.g-task .items:nth-child(1) { width: 40.500px; }
.g-task .items:nth-child(2) { width: 40.500px; }
.g-comm { width: 168px; }
.g-comm .group-body { padding-left: 6px; }
.g-comm .items:first-child { width: 83px; }
.off { color: #b5b5b5; }
.big { display: flex; flex-direction: column; align-items: center; padding-top: 2px; }
.big:first-child { width: 38px; }
.big + .big { width: 19px; margin-right: 7px; }
.big svg { width: 22px; height: 22px; fill: none; stroke: #333; stroke-width: 1.100; }
.big span { line-height: 12px; }
.opc { width: 10px; height: 10px; display: flex; flex-direction: column; align-items: center; }
.opc b { font-size: 5.200px; line-height: 6px; color: #000; }
.opc i { width: 9px; height: 3px; background: repeating-linear-gradient(90deg, #1b2f9b 0 2.500px, transparent 2.500px 3.300px); }

/* workspace */
.work { height: 517px; display: flex; background: #e4e4e4; }
.explorer { width: 174px; display: flex; flex-direction: column; }
.pane-head { height: 24px; display: flex; align-items: center; padding: 0 4px 0 3px; }
.pane-head h2 { flex: 1; font-size: 12px; line-height: 16px; font-weight: 400; color: #4a4a4a; }
.pane-head svg { width: 8px; height: 8px; margin-left: 4.500px; color: #555; }
.tree { list-style: none; height: 476px; background: #fdfdfd; border: 1px solid #b9b9b9; border-left-color: #d5d5d5; }
.tree li { height: 12px; display: flex; align-items: center; white-space: nowrap; }
.tree b { font-size: 7.400px; }
.tree .chev { width: 8px; height: 8px; margin-right: 4px; }
.tree .ico { width: 10px; height: 10px; margin-right: 3px; }
.l0 { padding-left: 4px; }
.l1 { padding-left: 17px; }
.l2 { padding-left: 30px; }
.l3 { padding-left: 43px; }
.side-tabs { display: flex; height: 15px; }
.side-tabs span { display: flex; align-items: center; gap: 2px; height: 14px; padding-bottom: 2px; }
.side-tabs svg { width: 10px; height: 10px; }
.side-tabs .st1 { width: 42px; padding-left: 2px; }
.side-tabs .st2 { width: 49px; padding: 0 0 1px 2px; background: #fff; border: 1px solid #bbb; border-top: 0; }
.side-tabs .st3 { width: 40px; padding-left: 3px; }
.side-tabs .st4 { padding-left: 1px; }

.editor { flex: 1; margin: 0 2px 4px 4px; display: flex; flex-direction: column; }
.doc-tabs { height: 16px; display: flex; padding: 2px 0 0 0; }
.tab { display: flex; align-items: center; height: 14px; width: 52px; padding: 0 0 1px 4px; background: #ececec; border: 1px solid #a9a9a9; border-bottom: 0; border-radius: 2px 2px 0 0; }
.tab.active { width: 79px; padding-left: 15px; background: #fff; font-weight: 600; font-size: 7.100px; color: #2b6c90; border: 0; clip-path: polygon(0 100%, 10px 0, 100% 0, 100% 100%); }
.tab .ico { width: 10px; height: 10px; margin-right: 3px; }
.tab.active .ico { margin-right: 5px; }
.tab .x { width: 8px; height: 8px; margin-left: 5px; color: #555; }
.doc-tabs > .caret { width: 8px; height: 8px; margin: 2px 0 0 auto; }
.doc { flex: 1; background: #fff; border: 1px solid #b4b4b4; border-top-color: #c4c4c4; padding: 1px 1px 2px 2px; display: flex; flex-direction: column; }
.doc-row { display: flex; height: 482px; }
.canvas { position: relative; width: 1084px; background: #fff; border: 2px solid #3c3c62; border-width: 2px 0 0 1px; overflow: hidden; }
.dots { position: absolute; inset: 0; }
.vbar { flex: 1; background: #f3f3f3; border: 1px solid #8d8d8d; border-width: 1px 1px 0 0; display: flex; flex-direction: column; align-items: center; padding: 2px 0; }
.vbar svg, .hbar svg { width: 8px; height: 8px; fill: none; stroke: #333; stroke-width: 1.300; }
.vbar i { width: 10px; height: 306px; margin-bottom: auto; background: #cbcbcb; }
.hbar { height: 12px; display: flex; align-items: center; background: #f0f0f0; border-bottom: 2px solid #a3a3a3; padding: 0 13px 0 2px; }
.hbar i { width: 897px; height: 10px; margin: 0 auto 0 2px; background: #cbcbcb; }

/* screen objects */
.caption { position: absolute; background: #fff; color: #111; font: bold 8.700px/12px "Liberation Sans", Arial, sans-serif; white-space: nowrap; }
.cap1 { left: 175px; top: 9px; }
.cap2 { left: 166px; top: 238px; }
.alarms { position: absolute; background: #000; font: bold 8.800px/13.300px "Liberation Sans", Arial, sans-serif; overflow: hidden; }
.a1 { left: 20px; top: 32px; width: 768px; height: 173px; }
.a2 { left: 19px; top: 272px; width: 769px; height: 174px; }
.ahead, .arow { display: grid; grid-template-columns: 16px 87px 66.500px 133.500px 53px 53px; align-items: center; white-space: nowrap; }
.ahead { height: 16.500px; width: 766px; background: #fff; color: #1a1a1a; border-top: 1px solid #bbb; }
.a2 .ahead { border-top: 0; height: 16px; width: 767px; }
.ahead span { height: 16px; line-height: 16px; border-right: 1px solid #e6e6e6; padding-left: 4px; display: flex; align-items: center; }
.ahead span:first-child { padding-left: 0; }
.ahead em { font: 6.500px/8px "DejaVu Sans", sans-serif; margin-left: 4px; color: #666; }
.ahead svg { width: 12px; height: 11px; }
.arow { height: 13.350px; color: #98000e; text-shadow: 0 0 1px #7a0010; }
.arow span { padding-left: 4px; }
.arow span:first-child { padding-left: 1px; }
.arow svg { width: 12px; height: 11px; }
.arow .t { letter-spacing: -.12px; }
.arow .m { letter-spacing: .04px; color: #ad000f; }
.slider { position: absolute; left: 843px; top: 172px; }
.slider-text { font: 7.600px "Open Sans", sans-serif; fill: #222; }
.slider-value { font: italic bold 8.500px "Liberation Sans", sans-serif; fill: #222; }

/* bottom panes */
.bottom { height: 63px; display: flex; border-top: 3px solid #cacaca; border-top-width: 2px; background: #e4e4e4; }
.watch { width: 640px; }
.output { flex: 1; padding-left: 4px; }
.bottom .pane-head { height: 24px; padding-bottom: 1px; }
.watch-grid { height: 22px; width: 637px; margin-left: 2px; border: 2px solid #777; border-width: 2px 1px 1px 2px; background: #fdfdfd; display: grid; grid-template-columns: 1fr 10px; grid-template-rows: 14px 5px; }
.wcols { display: flex; text-align: center; line-height: 13px; }
.wcols span { height: 14px; border-right: 1px solid #777; border-bottom: 1px solid #ddd; }
.w1 { width: 100px; }
.w2 { width: 67px; }
.w3 { width: 40px; }
.wcols .w4 { width: 56px; border-right-color: #ddd; }
.wbody { grid-row: 2; padding: 2px 0 0 230px; }
.check { width: 9px; height: 3px; border: 1px solid #444; border-bottom: 0; }
.wscroll { grid-row: 1 / 3; grid-column: 2; background: #f2f2f2; display: flex; flex-direction: column; justify-content: space-around; align-items: center; }
.wscroll svg { width: 8px; height: 8px; fill: none; stroke: #444; stroke-width: 1.200; }
.sheets { display: flex; height: 12px; line-height: 11px; }
.nav { display: flex; gap: 5px; padding: 3px 0 0 3px; width: 43px; color: #555; }
.nav svg { width: 6px; height: 6px; }
.sheet { height: 11px; padding-left: 4px; text-align: center; white-space: nowrap; border-bottom: 1px solid #aaa; background: linear-gradient(115deg, transparent 3px, #999 3.200px, #999 3.800px, transparent 4.300px); }
.sheet.on { background: #fff; font-weight: 600; color: #222; clip-path: polygon(0 0, 100% 0, calc(100% - 5px) 100%, 5px 100%); padding-left: 1px; }
.s1 { width: 28px; }
.s2 { width: 22px; }
.s3, .s4 { width: 25px; }
.s5 { width: 29px; }
.s6 { width: 50px; }
.s7 { width: 51px; }
.o1 { width: 38px; }
.o2 { width: 23px; }
.o3 { width: 52px; }
.sbar { flex: 1; display: flex; align-items: center; color: #444; }
.sbar svg { width: 11px; height: 10px; padding: 2px; background: #fff; border: 1px solid #ccc; }
.sbar.soft svg { color: #aaa; border-color: #f5f5f5; }
.sbar .end { margin-left: auto; margin-right: 12px; }
.grip { width: 2px; height: 9px; margin: 0 2px 0 171px; background: repeating-linear-gradient(#aaa 0 1px, transparent 1px 2.500px); }
.soft .grip { margin-left: 56px; }
.thumb { width: 11px; height: 10px; background: #fff; border: 1px solid #ccc; }
.log { height: 22px; border: 1px solid #aaa; background: #f1f1f1; padding: 2px 2px 0 3px; display: flex; justify-content: space-between; font: 7.100px/10px "Liberation Sans", sans-serif; }
.lscroll svg { width: 11px; height: 9px; padding: 1px; background: #fff; border: 1px solid #ccc; color: #555; }

/* status and task bar */
.status { height: 11px; display: flex; background: #f2f2f2; line-height: 12px; font-size: 7.500px; padding-left: 915px; white-space: nowrap; }
.f1 { width: 64px; }
.f2 { width: 18px; }
.f3 { width: 21px; }
.f4 { width: 20.500px; }
.f5 { width: 34px; }
.f6 { width: 64px; }
.dim { color: #b5b5b5; }
.f8 { margin-left: auto; padding-right: 2px; font-size: 7.300px; }
.taskbar { flex: 1; display: flex; background: #1d1e1f; color: #fff; }
.app { width: 32.700px; display: flex; justify-content: center; align-items: center; border: 3px solid transparent; border-width: 0 3px; }
.app svg { width: 16px; height: 16px; }
.app.run { background: linear-gradient(#76b5dd, #76b5dd) 0 100% / 100% 2px no-repeat; }
.app.alert { background-color: #a85a22; border-width: 0; }
.app.hot { background-color: #454749; border-width: 0; }
.tray { margin-left: auto; display: flex; align-items: center; gap: 4px; }
.tray svg { width: 12px; height: 12px; }
.clock { width: 50px; display: flex; flex-direction: column; align-items: center; justify-content: center; line-height: 12px; padding-bottom: 2px; }
.notice { position: relative; width: 32px; padding: 6px 0 0 5px; border-right: 1px solid #666; }
.notice svg { width: 17px; height: 18px; }
.notice b { position: absolute; left: 14px; top: 13px; font-weight: 400; }
.pointer { position: absolute; left: 165px; top: 29px; width: 8px; height: 12px; }
```
